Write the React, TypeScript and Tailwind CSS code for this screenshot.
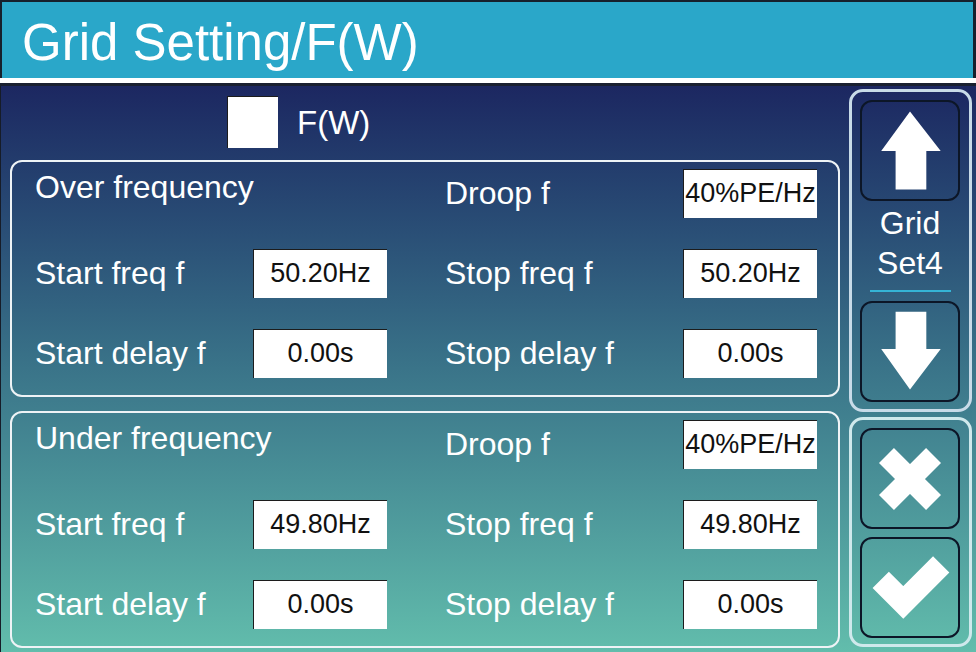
import React from "react";

type Row = { label: string; value: string };

function ValueBox({ value }: { value: string }) {
  return (
    <div className="flex h-[49px] w-[134px] items-center justify-center self-center border-l border-t border-[#1c1c1c] bg-white text-[27px] leading-none text-[#111]">
      {value}
    </div>
  );
}

function FreqPanel({
  title,
  droop,
  left,
  right,
}: {
  title: string;
  droop: string;
  left: Row[];
  right: Row[];
}) {
  return (
    <div className="grid h-[237px] grid-cols-[218px_134px_296px_134px] grid-rows-[50px_50px_50px] gap-y-[30px] rounded-[12px] border-2 border-[#eef3f6] pl-[23px] pt-[6px] text-white">
      {/* row 1: title + droop */}
      <div className="self-start whitespace-nowrap text-[32px] leading-[38px]">{title}</div>
      <div />
      <div className="self-center whitespace-nowrap pl-[58px] text-[32px] leading-none">Droop f</div>
      <ValueBox value={droop} />

      {left.map((l, i) => (
        <React.Fragment key={l.label}>
          <div className="self-center whitespace-nowrap text-[32px] leading-none">{l.label}</div>
          <ValueBox value={l.value} />
          <div className="self-center whitespace-nowrap pl-[58px] text-[32px] leading-none">
            {right[i].label}
          </div>
          <ValueBox value={right[i].value} />
        </React.Fragment>
      ))}
    </div>
  );
}

function IconButton({ children, className }: { children: React.ReactNode; className?: string }) {
  return (
    <div
      className={`h-[101px] w-[100px] rounded-[12px] border-2 border-[#0c1627] ${className ?? ""}`}
    >
      <svg viewBox="0 0 100 101" width="96" height="97" className="block">
        {children}
      </svg>
    </div>
  );
}

export default function App() {
  return (
    <div className="flex h-[652px] w-[976px] flex-col overflow-hidden bg-[#141b2a] font-['Liberation_Sans',Arial,sans-serif]">
      {/* Title bar */}
      <div className="flex h-[78px] items-center border-l-2 border-r-[3px] border-t-2 border-[#16202c] bg-[#2aa7c9] pl-[20px] pt-[4px]">
        <span className="text-[51px] leading-none text-white">Grid Setting/F(W)</span>
      </div>
      <div className="h-[5px] bg-white" />
      <div className="h-[3px] bg-[#1a2030]" />

      {/* Body */}
      <div className="flex flex-1 border-l border-[#161c28] bg-linear-to-b from-[#1c2761] via-[#3a7489] to-[#62bdac]">
        <div className="ml-[9px] flex w-[830px] flex-col pt-[10px]">
          <div className="flex h-[52px] items-center">
            <div className="ml-[217px] h-[52px] w-[51px] border-l border-t border-[#1c1c1c] bg-white" />
            <span className="ml-[19px] text-[33px] leading-none text-white">F(W)</span>
          </div>

          <div className="mt-[12px]">
            <FreqPanel
              title="Over frequency"
              droop="40%PE/Hz"
              left={[
                { label: "Start freq f", value: "50.20Hz" },
                { label: "Start delay f", value: "0.00s" },
              ]}
              right={[
                { label: "Stop freq f", value: "50.20Hz" },
                { label: "Stop delay f", value: "0.00s" },
              ]}
            />
          </div>
          <div className="mt-[14px]">
            <FreqPanel
              title="Under frequency"
              droop="40%PE/Hz"
              left={[
                { label: "Start freq f", value: "49.80Hz" },
                { label: "Start delay f", value: "0.00s" },
              ]}
              right={[
                { label: "Stop freq f", value: "49.80Hz" },
                { label: "Stop delay f", value: "0.00s" },
              ]}
            />
          </div>
        </div>

        {/* Right side buttons */}
        <div className="ml-[9px] flex w-[123px] flex-col pt-[3px]">
          <div className="flex h-[323px] flex-col rounded-[14px] border-[3px] border-[#c8dbe8] pl-[8px] pr-[9px] pt-[8px]">
            <IconButton>
              <polygon points="50,10 82,51 67,51 67,91 35,91 35,51 20,51" fill="white" />
            </IconButton>
            <div className="mt-[2px] flex h-[80px] flex-col items-center text-[32px] leading-[40px] text-white">
              <span>Grid</span>
              <span>Set4</span>
            </div>
            <div className="ml-[10px] mt-[7px] h-[2px] w-[81px] bg-[#35b5d6]" />
            <IconButton className="mt-[9px]">
              <polygon points="35,9 67,9 67,48 82,48 50,90 20,48 35,48" fill="white" />
            </IconButton>
          </div>

          <div className="mt-[5px] flex h-[230px] flex-col rounded-[14px] border-[3px] border-[#cfe9ec] pl-[8px] pr-[9px] pt-[8px]">
            <IconButton>
              <line x1="25.5" y1="26.5" x2="74.5" y2="75.5" stroke="white" strokeWidth="22" />
              <line x1="74.5" y1="26.5" x2="25.5" y2="75.5" stroke="white" strokeWidth="22" />
            </IconButton>
            <IconButton className="mt-[8px]">
              <polyline
                points="19.5,42.5 43,66 82.5,26.5"
                fill="none"
                stroke="white"
                strokeWidth="24"
                strokeLinejoin="miter"
              />
            </IconButton>
          </div>
        </div>
      </div>
    </div>
  );
}
